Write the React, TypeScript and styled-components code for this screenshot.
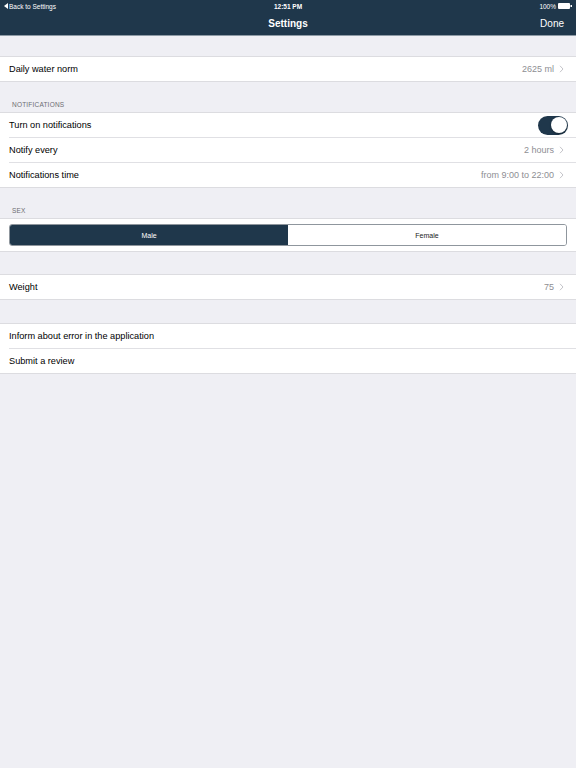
import React, { useState } from 'react';
import styled, { createGlobalStyle } from 'styled-components';

const GlobalStyle = createGlobalStyle`
  html, body {
    margin: 0;
    padding: 0;
    background: #efeff4;
    font-family: "Liberation Sans", Arial, sans-serif;
  }
`;

const NAVY = '#1f374b';

const Page = styled.div`
  width: 576px;
  min-height: 768px;
  background: #efeff4;
`;

const Header = styled.header`
  background: ${NAVY};
  color: #fff;
  border-bottom: 1px solid #8d9aa5;
`;

const StatusBar = styled.div`
  height: 12px;
  display: grid;
  grid-template-columns: 1fr auto 1fr;
  align-items: center;
  padding: 0 4px;
  font-size: 6.5px;
`;

const Back = styled.span`
  display: flex;
  align-items: center;
  gap: 1px;
`;

const Clock = styled.span`
  font-weight: bold;
`;

const Battery = styled.span`
  justify-self: end;
  display: flex;
  align-items: center;
  gap: 2px;
`;

const NavBar = styled.div`
  height: 23px;
  display: grid;
  grid-template-columns: 1fr auto 1fr;
  align-items: center;
  padding: 0 12px;
`;

const Title = styled.span`
  font-size: 10px;
  font-weight: bold;
`;

const Done = styled.span`
  justify-self: end;
  font-size: 10px;
`;

const Gap = styled.div<{ $h: number }>`
  height: ${(p) => p.$h}px;
`;

const SectionTitle = styled.div<{ $h: number }>`
  height: ${(p) => p.$h}px;
  display: flex;
  align-items: flex-end;
  padding: 0 0 4px 12px;
  box-sizing: border-box;
  font-size: 6.5px;
  color: #6d6d72;
  letter-spacing: 0.2px;
`;

const Group = styled.div`
  background: #fff;
  border-top: 1px solid #dcdce0;
  border-bottom: 1px solid #dcdce0;
`;

const Row = styled.div`
  height: 24px;
  display: flex;
  align-items: center;
  justify-content: space-between;
  padding: 0 12px 0 9px;
  font-size: 9.2px;
  color: #000;

  & + & {
    border-top: 1px solid #e0e0e4;
    margin-left: 9px;
    padding-left: 0;
  }
`;

const Value = styled.span`
  display: flex;
  align-items: center;
  gap: 5px;
  color: #8e8e93;
  font-size: 9px;
`;

const Switch = styled.button<{ $on: boolean }>`
  width: 30px;
  height: 19px;
  margin-right: -4px;
  border-radius: 10px;
  border: none;
  padding: 1.5px;
  background: ${(p) => (p.$on ? NAVY : '#e5e5ea')};
  display: flex;
  justify-content: ${(p) => (p.$on ? 'flex-end' : 'flex-start')};
  cursor: pointer;

  &::after {
    content: '';
    width: 16px;
    height: 16px;
    border-radius: 50%;
    background: #fff;
    box-shadow: 0 1px 2px rgba(0, 0, 0, 0.3);
  }
`;

const SegmentRow = styled.div`
  height: 32px;
  display: flex;
  align-items: center;
  padding: 0 9px;
`;

const Segments = styled.div`
  flex: 1;
  display: grid;
  grid-template-columns: 1fr 1fr;
  height: 20px;
  border: 1px solid #8f969d;
  border-radius: 3px;
  overflow: hidden;
`;

const Segment = styled.button<{ $active: boolean }>`
  border: none;
  font-family: inherit;
  font-size: 7px;
  background: ${(p) => (p.$active ? NAVY : '#fff')};
  color: ${(p) => (p.$active ? '#fff' : '#222')};
  cursor: pointer;
`;

const Chevron = () => (
  <svg width="5" height="8" viewBox="0 0 5 8">
    <path d="M1 0.8 L4 4 L1 7.2" fill="none" stroke="#c4c4c9" strokeWidth="1" />
  </svg>
);

export default function App() {
  const [notify, setNotify] = useState(true);
  const [sex, setSex] = useState<'male' | 'female'>('male');

  return (
    <Page>
      <GlobalStyle />
      <Header>
        <StatusBar>
          <Back>
            <svg width="4" height="6" viewBox="0 0 4 6">
              <path d="M4 0 L0 3 L4 6 Z" fill="#fff" />
            </svg>
            Back to Settings
          </Back>
          <Clock>12:51 PM</Clock>
          <Battery>
            100%
            <svg width="14" height="6" viewBox="0 0 14 6">
              <rect x="0" y="0" width="12" height="6" rx="1" fill="#fff" />
              <rect x="12.5" y="2" width="1.5" height="2" fill="#fff" />
            </svg>
          </Battery>
        </StatusBar>
        <NavBar>
          <span />
          <Title>Settings</Title>
          <Done>Done</Done>
        </NavBar>
      </Header>

      <Gap $h={20} />
      <Group>
        <Row>
          Daily water norm
          <Value>
            2625 ml <Chevron />
          </Value>
        </Row>
      </Group>

      <SectionTitle $h={30}>NOTIFICATIONS</SectionTitle>
      <Group>
        <Row>
          Turn on notifications
          <Switch $on={notify} onClick={() => setNotify(!notify)} />
        </Row>
        <Row>
          Notify every
          <Value>
            2 hours <Chevron />
          </Value>
        </Row>
        <Row>
          Notifications time
          <Value>
            from 9:00 to 22:00 <Chevron />
          </Value>
        </Row>
      </Group>

      <SectionTitle $h={30}>SEX</SectionTitle>
      <Group>
        <SegmentRow>
          <Segments>
            <Segment $active={sex === 'male'} onClick={() => setSex('male')}>
              Male
            </Segment>
            <Segment $active={sex === 'female'} onClick={() => setSex('female')}>
              Female
            </Segment>
          </Segments>
        </SegmentRow>
      </Group>

      <Gap $h={22} />
      <Group>
        <Row>
          Weight
          <Value>
            75 <Chevron />
          </Value>
        </Row>
      </Group>

      <Gap $h={23} />
      <Group>
        <Row>Inform about error in the application</Row>
        <Row>Submit a review</Row>
      </Group>
    </Page>
  );
}
